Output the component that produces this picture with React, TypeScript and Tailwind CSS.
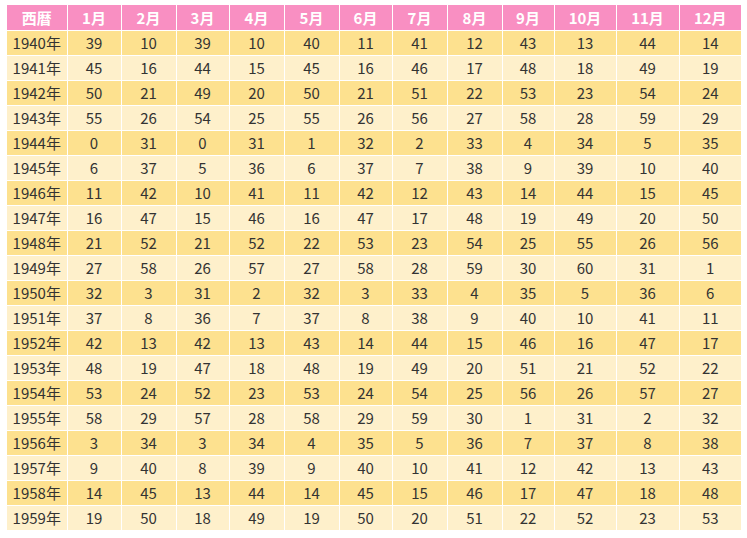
const months = ["1月", "2月", "3月", "4月", "5月", "6月", "7月", "8月", "9月", "10月", "11月", "12月"];

const rows: [number, number[]][] = [
  [1940, [39, 10, 39, 10, 40, 11, 41, 12, 43, 13, 44, 14]],
  [1941, [45, 16, 44, 15, 45, 16, 46, 17, 48, 18, 49, 19]],
  [1942, [50, 21, 49, 20, 50, 21, 51, 22, 53, 23, 54, 24]],
  [1943, [55, 26, 54, 25, 55, 26, 56, 27, 58, 28, 59, 29]],
  [1944, [0, 31, 0, 31, 1, 32, 2, 33, 4, 34, 5, 35]],
  [1945, [6, 37, 5, 36, 6, 37, 7, 38, 9, 39, 10, 40]],
  [1946, [11, 42, 10, 41, 11, 42, 12, 43, 14, 44, 15, 45]],
  [1947, [16, 47, 15, 46, 16, 47, 17, 48, 19, 49, 20, 50]],
  [1948, [21, 52, 21, 52, 22, 53, 23, 54, 25, 55, 26, 56]],
  [1949, [27, 58, 26, 57, 27, 58, 28, 59, 30, 60, 31, 1]],
  [1950, [32, 3, 31, 2, 32, 3, 33, 4, 35, 5, 36, 6]],
  [1951, [37, 8, 36, 7, 37, 8, 38, 9, 40, 10, 41, 11]],
  [1952, [42, 13, 42, 13, 43, 14, 44, 15, 46, 16, 47, 17]],
  [1953, [48, 19, 47, 18, 48, 19, 49, 20, 51, 21, 52, 22]],
  [1954, [53, 24, 52, 23, 53, 24, 54, 25, 56, 26, 57, 27]],
  [1955, [58, 29, 57, 28, 58, 29, 59, 30, 1, 31, 2, 32]],
  [1956, [3, 34, 3, 34, 4, 35, 5, 36, 7, 37, 8, 38]],
  [1957, [9, 40, 8, 39, 9, 40, 10, 41, 12, 42, 13, 43]],
  [1958, [14, 45, 13, 44, 14, 45, 15, 46, 17, 47, 18, 48]],
  [1959, [19, 50, 18, 49, 19, 50, 20, 51, 22, 52, 23, 53]],
];

// column widths measured from the screenshot
const widths = [60, 54, 55, 53, 55, 55, 53, 55, 55, 52, 62, 63, 62];

export default function App() {
  return (
    <div className="min-h-screen bg-white pt-[5px] pl-[7px] font-['Noto_Sans_CJK_JP','Noto_Sans',sans-serif]">
      <table className="border-collapse table-fixed w-[734px] text-[15px] leading-none">
        <colgroup>
          {widths.map((w, i) => (
            <col key={i} style={{ width: w }} />
          ))}
        </colgroup>
        <thead>
          <tr className="h-[25px] bg-[#f98fc2] text-white">
            <th className="border border-white border-t-0 border-l-0 font-bold">西暦</th>
            {months.map((m) => (
              <th key={m} className="border border-white border-t-0 font-bold last:border-r-0">
                {m}
              </th>
            ))}
          </tr>
        </thead>
        <tbody>
          {rows.map(([year, vals], i) => (
            <tr key={year} className={`h-[25px] text-[#333] ${i % 2 === 0 ? "bg-[#fde18f]" : "bg-[#fef0cb]"}`}>
              <td className="border border-white border-l-0 text-center">{year}年</td>
              {vals.map((v, j) => (
                <td key={j} className="border border-white text-center last:border-r-0">
                  {v}
                </td>
              ))}
            </tr>
          ))}
        </tbody>
      </table>
    </div>
  );
}
